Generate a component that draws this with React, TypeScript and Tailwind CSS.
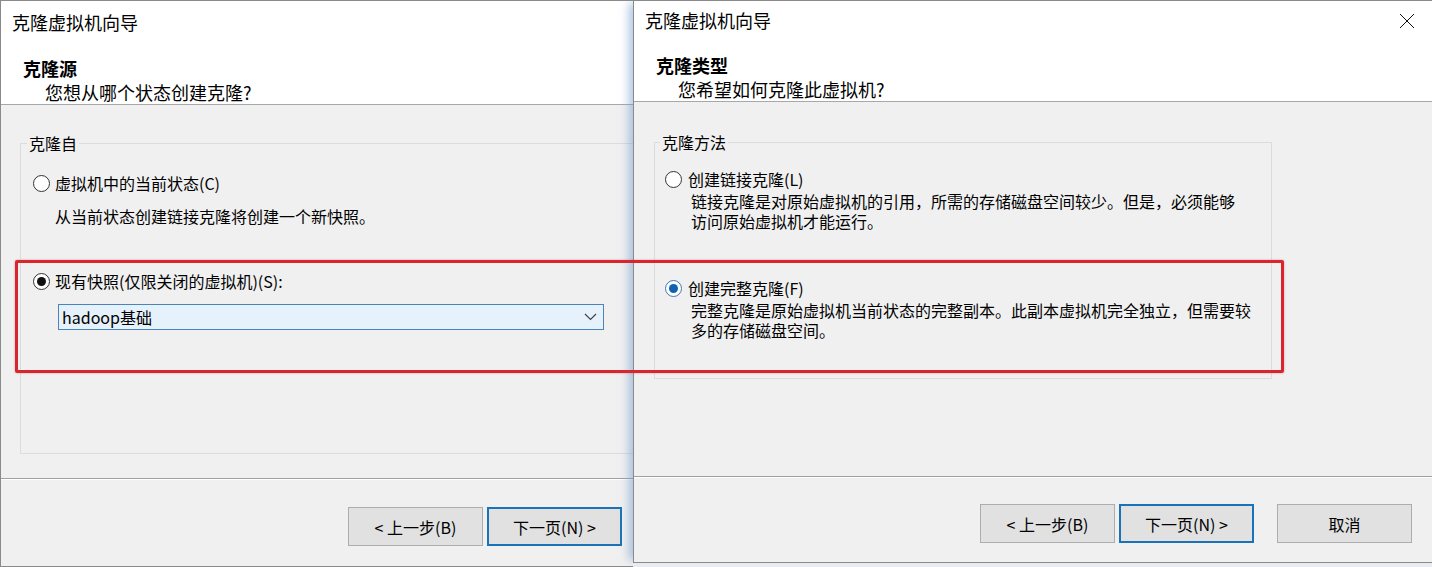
import React from "react"

function Radio({ checked, blue }: { checked?: boolean; blue?: boolean }) {
  return (
    <span
      className={
        "flex h-[17px] w-[17px] shrink-0 items-center justify-center rounded-full border bg-white " +
        (blue ? "border-[#3b79b7]" : "border-[#333333]")
      }
    >
      {checked && (
        <span className={"h-[9px] w-[9px] rounded-full " + (blue ? "bg-[#1062b4]" : "bg-[#111111]")} />
      )}
    </span>
  )
}

function Btn({ label, primary }: { label: string; primary?: boolean }) {
  return (
    <div
      className={
        "flex h-[39px] w-[135px] items-center justify-center bg-[#e1e1e1] text-[16px] text-black " +
        (primary ? "border-2 border-[#1a73b8]" : "border border-[#adadad]")
      }
    >
      {label}
    </div>
  )
}

function Chevron() {
  return (
    <svg width="13" height="8" viewBox="0 0 13 8" fill="none">
      <polyline points="1,1 6.5,6.5 12,1" stroke="#444" strokeWidth="1.2" />
    </svg>
  )
}

function CloseX() {
  return (
    <svg width="16" height="16" viewBox="0 0 16 16" fill="none">
      <line x1="1" y1="1" x2="15" y2="15" stroke="#111" strokeWidth="1" />
      <line x1="15" y1="1" x2="1" y2="15" stroke="#111" strokeWidth="1" />
    </svg>
  )
}

export default function App() {
  return (
    <div className="relative flex h-[567px] w-[1432px] overflow-hidden bg-[#f0f0f0] font-['Noto_Sans_CJK_SC','Microsoft_YaHei',sans-serif] text-black">
      {/* left wizard: clone source */}
      <div className="flex h-[567px] w-[633px] shrink-0 flex-col overflow-hidden border-l border-t border-b border-[#8a8a8a] bg-[#f0f0f0]">
        <div className="h-[104px] shrink-0 border-b border-[#a8a8a8] bg-white pt-[9px]">
          <div className="pl-[11px] text-[18px] leading-[24px]">克隆虚拟机向导</div>
          <div className="mt-[22px] pl-[22px] text-[18px] font-bold leading-[24px]">克隆源</div>
          <div className="pl-[44px] text-[18px] leading-[24px]">您想从哪个状态创建克隆?</div>
        </div>

        <div className="h-[373px] shrink-0 pt-[28px]">
          <fieldset className="ml-[19px] w-[720px] border border-[#dcdcdc]">
            <legend className="ml-[6px] px-[2px] text-[16px] leading-[20px]">克隆自</legend>
            <div className="h-[300px] pl-[12px] pt-[20px] text-[16px] leading-[20px]">
              <div className="flex h-[20px] items-center gap-[5px]">
                <Radio />
                <span>虚拟机中的当前状态(C)</span>
              </div>
              <div className="mt-[13px] pl-[22px]">从当前状态创建链接克隆将创建一个新快照。</div>
              <div className="mt-[45px] flex h-[20px] items-center gap-[5px]">
                <Radio checked />
                <span>现有快照(仅限关闭的虚拟机)(S):</span>
              </div>
              <div className="ml-[25px] mt-[13px] flex h-[26px] w-[546px] items-center justify-between border border-[#4a84b8] bg-[#e5f1fb] pl-[3px] pr-[6px]">
                <span>hadoop基础</span>
                <Chevron />
              </div>
            </div>
          </fieldset>
        </div>

        <div className="flex flex-1 justify-end gap-[4px] border-t border-[#a0a0a0] pr-[11px] pt-[28px] shadow-[inset_0_1px_0_#ffffff]">
          <Btn label="< 上一步(B)" />
          <Btn label="下一页(N) >" primary />
        </div>
      </div>

      {/* right wizard: clone type */}
      <div className="relative z-10 flex flex-1 flex-col">
        <div className="flex h-[563px] flex-col border-l border-t border-b border-[#8a8a8a] bg-[#f0f0f0] shadow-[-7px_0_9px_-3px_rgba(110,150,210,0.55)]">
          <div className="relative h-[101px] shrink-0 border-b border-[#a8a8a8] bg-white pt-[7px]">
            <div className="pl-[11px] text-[18px] leading-[24px]">克隆虚拟机向导</div>
            <div className="absolute right-[17px] top-[12px]">
              <CloseX />
            </div>
            <div className="mt-[21px] pl-[22px] text-[18px] font-bold leading-[24px]">克隆类型</div>
            <div className="pl-[44px] text-[18px] leading-[24px]">您希望如何克隆此虚拟机?</div>
          </div>

          <div className="h-[374px] shrink-0 pt-[30px]">
            <fieldset className="ml-[20px] w-[618px] border border-[#dcdcdc]">
              <legend className="ml-[5px] px-[2px] text-[16px] leading-[20px]">克隆方法</legend>
              <div className="h-[226px] pl-[10px] pt-[17px] text-[16px] leading-[20px]">
                <div className="flex h-[20px] items-center gap-[6px]">
                  <Radio />
                  <span>创建链接克隆(L)</span>
                </div>
                <div className="mt-[2px] whitespace-nowrap pl-[26px]">
                  链接克隆是对原始虚拟机的引用，所需的存储磁盘空间较少。但是，必须能够
                  <br />
                  访问原始虚拟机才能运行。
                </div>
                <div className="mt-[47px] flex h-[20px] items-center gap-[6px]">
                  <Radio checked blue />
                  <span>创建完整克隆(F)</span>
                </div>
                <div className="mt-[2px] whitespace-nowrap pl-[26px]">
                  完整克隆是原始虚拟机当前状态的完整副本。此副本虚拟机完全独立，但需要较
                  <br />
                  多的存储磁盘空间。
                </div>
              </div>
            </fieldset>
          </div>

          <div className="flex flex-1 justify-end border-t border-[#a0a0a0] pr-[20px] pt-[27px] shadow-[inset_0_1px_0_#ffffff]">
            <div className="flex gap-[4px]">
              <Btn label="< 上一步(B)" />
              <Btn label="下一页(N) >" primary />
            </div>
            <div className="ml-[23px]">
              <Btn label="取消" />
            </div>
          </div>
        </div>
        <div className="flex-1 bg-[#e8ebef]" />
      </div>

      {/* red highlight drawn over both dialogs */}
      <div className="pointer-events-none absolute left-[15px] top-[260px] z-20 h-[113px] w-[1269px] rounded-[2px] border-[3px] border-[#d8262f] shadow-[0_0_2px_rgba(216,38,47,0.5)]" />
    </div>
  )
}
